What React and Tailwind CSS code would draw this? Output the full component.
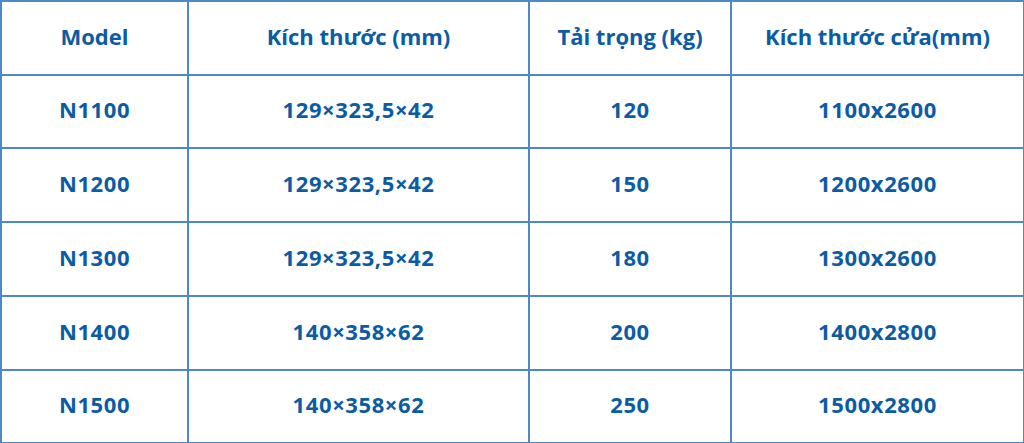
const rows = [
  ['N1100', '129×323,5×42', '120', '1100x2600'],
  ['N1200', '129×323,5×42', '150', '1200x2600'],
  ['N1300', '129×323,5×42', '180', '1300x2600'],
  ['N1400', '140×358×62', '200', '1400x2800'],
  ['N1500', '140×358×62', '250', '1500x2800'],
];

const heads = ['Model', 'Kích thước (mm)', 'Tải trọng (kg)', 'Kích thước cửa(mm)'];

const App = () => {
  return (
    <div className="w-[1024px] h-[443px] bg-white font-['Open_Sans',sans-serif] font-bold text-[#0b5ca5] text-[22px]">
      <div className="grid grid-cols-[187px_341px_202px_293px] grid-rows-[74px_73px_74px_74px_74px_73px] border-t-2 border-l-2 border-[#4f88c6]">
        {heads.map((h) => (
          <div key={h} className="flex items-center justify-center pb-1 border-r-2 border-b-2 border-[#4f88c6]">
            {h}
          </div>
        ))}
        {rows.map((r) =>
          r.map((c, i) => (
            <div key={r[0] + i} className="flex items-center justify-center pb-1 border-r-2 border-b-2 border-[#4f88c6] tracking-[0.6px]">
              {c}
            </div>
          ))
        )}
      </div>
    </div>
  );
};

export default App;
